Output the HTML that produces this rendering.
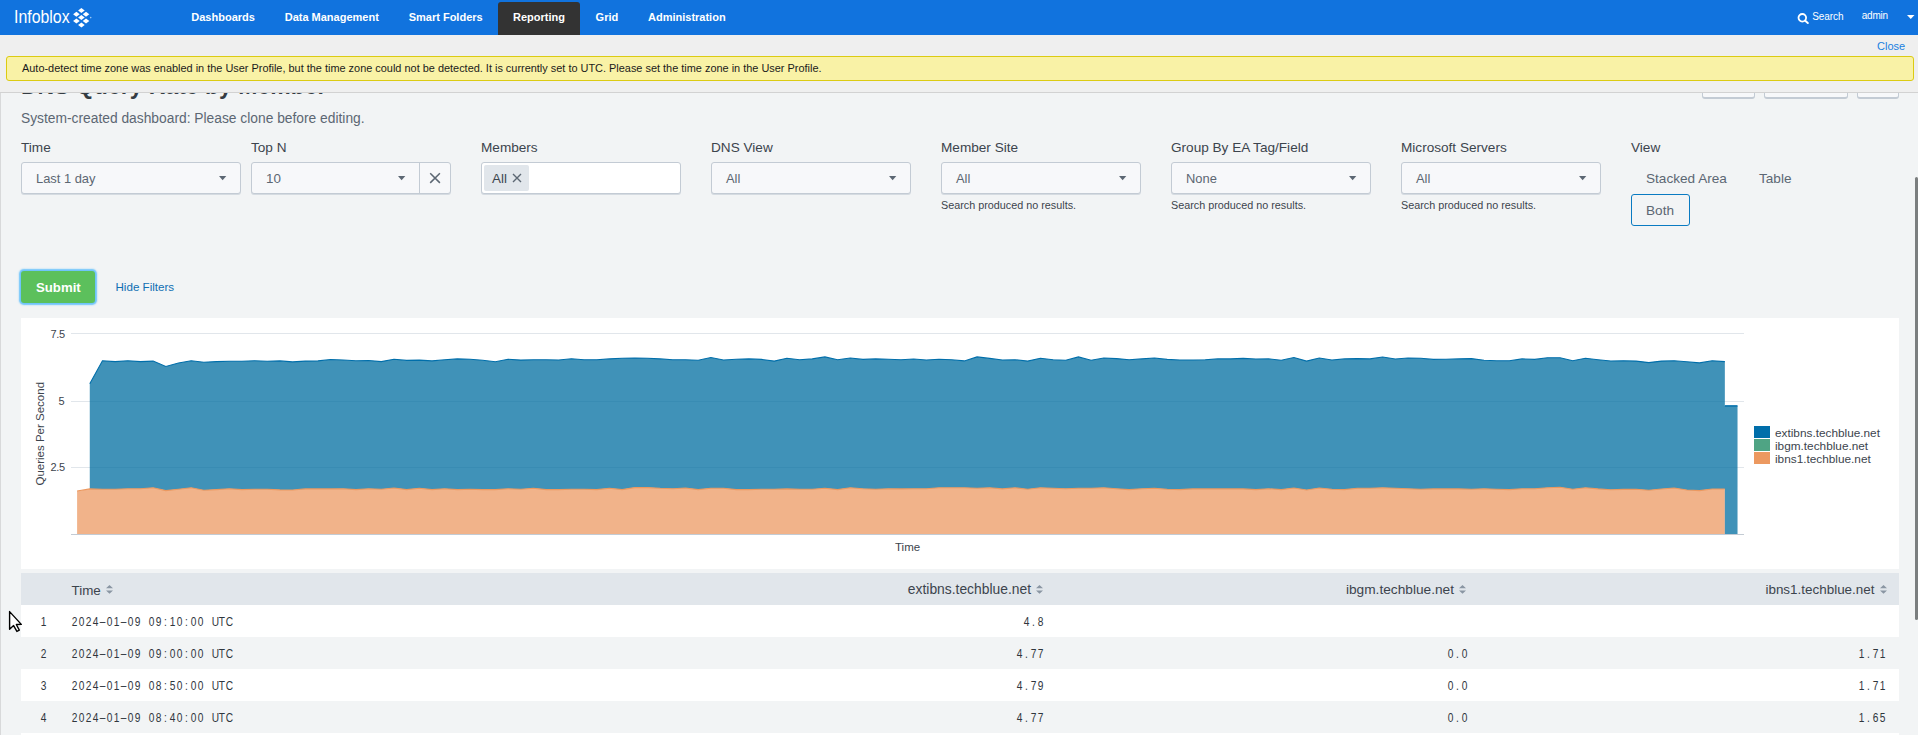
<!DOCTYPE html>
<html><head><meta charset="utf-8"><title>Infoblox Reporting</title>
<style>
html,body{margin:0;padding:0;}
body{width:1918px;height:735px;overflow:hidden;position:relative;background:#f2f4f5;font-family:'Liberation Sans', sans-serif;}
.t{position:absolute;white-space:nowrap;}
.panel{position:absolute;}
.sel{position:absolute;border:1px solid #c3cbd4;border-radius:3px;background:#f7f8fa;box-shadow:0 1px 0 #d5dbe1;}
</style></head><body>
<div class="panel" style="left:0;top:92px;width:1px;height:643px;background:#d8d9da"></div>
<div class="t" style="left:21px;top:74.53px;font-size:23px;line-height:23px;color:#353c43;font-weight:bold;font-family:'Liberation Sans', sans-serif;">DNS Query Rate by Member</div>
<div class="panel" style="left:1702px;top:66px;width:51px;height:30px;border:1px solid #c3cbd4;border-bottom-width:2px;border-radius:3px;background:#f7f8fa"></div>
<div class="panel" style="left:1764px;top:66px;width:82px;height:30px;border:1px solid #c3cbd4;border-bottom-width:2px;border-radius:3px;background:#f7f8fa"></div>
<div class="panel" style="left:1857px;top:66px;width:40px;height:30px;border:1px solid #c3cbd4;border-bottom-width:2px;border-radius:3px;background:#f7f8fa"></div>
<div class="t" style="left:21px;top:111.82px;font-size:13.8px;line-height:13.8px;color:#5c6773;font-weight:normal;font-family:'Liberation Sans', sans-serif;">System-created dashboard: Please clone before editing.</div>
<div class="t" style="left:21px;top:141.48px;font-size:13.6px;line-height:13.6px;color:#3c444d;font-weight:normal;font-family:'Liberation Sans', sans-serif;">Time</div>
<div class="t" style="left:251px;top:141.48px;font-size:13.6px;line-height:13.6px;color:#3c444d;font-weight:normal;font-family:'Liberation Sans', sans-serif;">Top N</div>
<div class="t" style="left:481px;top:141.48px;font-size:13.6px;line-height:13.6px;color:#3c444d;font-weight:normal;font-family:'Liberation Sans', sans-serif;">Members</div>
<div class="t" style="left:711px;top:141.48px;font-size:13.6px;line-height:13.6px;color:#3c444d;font-weight:normal;font-family:'Liberation Sans', sans-serif;">DNS View</div>
<div class="t" style="left:941px;top:141.48px;font-size:13.6px;line-height:13.6px;color:#3c444d;font-weight:normal;font-family:'Liberation Sans', sans-serif;">Member Site</div>
<div class="t" style="left:1171px;top:141.48px;font-size:13.6px;line-height:13.6px;color:#3c444d;font-weight:normal;font-family:'Liberation Sans', sans-serif;">Group By EA Tag/Field</div>
<div class="t" style="left:1401px;top:141.48px;font-size:13.6px;line-height:13.6px;color:#3c444d;font-weight:normal;font-family:'Liberation Sans', sans-serif;">Microsoft Servers</div>
<div class="t" style="left:1631px;top:141.48px;font-size:13.6px;line-height:13.6px;color:#3c444d;font-weight:normal;font-family:'Liberation Sans', sans-serif;">View</div>
<div class="sel" style="left:21px;top:162px;width:218px;height:30px"></div><div class="t" style="left:36px;top:172.58px;font-size:12.9px;line-height:12.9px;color:#5c6773;font-weight:normal;font-family:'Liberation Sans', sans-serif;">Last 1 day</div><svg width="8" height="5" style="position:absolute;left:219px;top:176px"><path d="M0 0 H7.3 L3.65 4.3 Z" fill="#5c6773"/></svg>
<div class="sel" style="left:251px;top:162px;width:198px;height:30px"></div>
<div class="panel" style="left:419px;top:163px;width:1px;height:30px;background:#c3cbd4"></div>
<div class="t" style="left:266px;top:171.65px;font-size:13.4px;line-height:13.4px;color:#5c6773;font-weight:normal;font-family:'Liberation Sans', sans-serif;">10</div>
<svg width="8" height="5" style="position:absolute;left:398px;top:176px"><path d="M0 0 H7.3 L3.65 4.3 Z" fill="#5c6773"/></svg>
<svg width="12" height="12" style="position:absolute;left:429px;top:172px"><path d="M1.2 1.2 L10.9 10.9 M10.9 1.2 L1.2 10.9" stroke="#5c6773" stroke-width="1.5"/></svg>
<div class="sel" style="left:481px;top:162px;width:198px;height:30px;background:#fff"></div>
<div class="panel" style="left:484px;top:165px;width:45px;height:26px;background:#e1e6eb;border-radius:2px"></div>
<div class="t" style="left:492px;top:171.65px;font-size:13.4px;line-height:13.4px;color:#3c444d;font-weight:normal;font-family:'Liberation Sans', sans-serif;">All</div>
<svg width="10" height="10" style="position:absolute;left:512px;top:173px"><path d="M1 1 L9 9 M9 1 L1 9" stroke="#5c6773" stroke-width="1.4"/></svg>
<div class="sel" style="left:711px;top:162px;width:198px;height:30px"></div><div class="t" style="left:726px;top:172.58px;font-size:12.9px;line-height:12.9px;color:#5c6773;font-weight:normal;font-family:'Liberation Sans', sans-serif;">All</div><svg width="8" height="5" style="position:absolute;left:889px;top:176px"><path d="M0 0 H7.3 L3.65 4.3 Z" fill="#5c6773"/></svg>
<div class="sel" style="left:941px;top:162px;width:198px;height:30px"></div><div class="t" style="left:956px;top:172.58px;font-size:12.9px;line-height:12.9px;color:#5c6773;font-weight:normal;font-family:'Liberation Sans', sans-serif;">All</div><svg width="8" height="5" style="position:absolute;left:1119px;top:176px"><path d="M0 0 H7.3 L3.65 4.3 Z" fill="#5c6773"/></svg><div class="t" style="left:941px;top:200.36px;font-size:10.8px;line-height:10.8px;color:#3c444d;font-weight:normal;font-family:'Liberation Sans', sans-serif;">Search produced no results.</div>
<div class="sel" style="left:1171px;top:162px;width:198px;height:30px"></div><div class="t" style="left:1186px;top:172.58px;font-size:12.9px;line-height:12.9px;color:#5c6773;font-weight:normal;font-family:'Liberation Sans', sans-serif;">None</div><svg width="8" height="5" style="position:absolute;left:1349px;top:176px"><path d="M0 0 H7.3 L3.65 4.3 Z" fill="#5c6773"/></svg><div class="t" style="left:1171px;top:200.36px;font-size:10.8px;line-height:10.8px;color:#3c444d;font-weight:normal;font-family:'Liberation Sans', sans-serif;">Search produced no results.</div>
<div class="sel" style="left:1401px;top:162px;width:198px;height:30px"></div><div class="t" style="left:1416px;top:172.58px;font-size:12.9px;line-height:12.9px;color:#5c6773;font-weight:normal;font-family:'Liberation Sans', sans-serif;">All</div><svg width="8" height="5" style="position:absolute;left:1579px;top:176px"><path d="M0 0 H7.3 L3.65 4.3 Z" fill="#5c6773"/></svg><div class="t" style="left:1401px;top:200.36px;font-size:10.8px;line-height:10.8px;color:#3c444d;font-weight:normal;font-family:'Liberation Sans', sans-serif;">Search produced no results.</div>
<div class="t" style="left:1646px;top:172.48px;font-size:13.6px;line-height:13.6px;color:#5c6773;font-weight:normal;font-family:'Liberation Sans', sans-serif;">Stacked Area</div>
<div class="t" style="left:1759px;top:172.48px;font-size:13.6px;line-height:13.6px;color:#5c6773;font-weight:normal;font-family:'Liberation Sans', sans-serif;">Table</div>
<div class="panel" style="left:1631px;top:194px;width:57px;height:30px;border:1px solid #0a7bc2;border-radius:3px;background:#f2f4f5"></div>
<div class="t" style="left:1646px;top:203.98px;font-size:13.6px;line-height:13.6px;color:#5c6773;font-weight:normal;font-family:'Liberation Sans', sans-serif;">Both</div>
<div class="panel" style="left:21px;top:271px;width:74px;height:32px;border-radius:3px;background:#5cc05c;box-shadow:0 0 1.5px 1.8px rgba(92,190,252,0.9)"></div>
<div class="t" style="left:36px;top:280.82px;font-size:13.2px;line-height:13.2px;color:#ffffff;font-weight:bold;font-family:'Liberation Sans', sans-serif;">Submit</div>
<div class="t" style="left:115.5px;top:280.98px;font-size:11.6px;line-height:11.6px;color:#106fb3;font-weight:normal;font-family:'Liberation Sans', sans-serif;">Hide Filters</div>
<svg width="1878" height="251" style="position:absolute;left:21px;top:318px"><rect width="1878" height="251" fill="#ffffff"/><rect x="50" y="15" width="1673" height="1" fill="#e1e6eb"/><rect x="50" y="83" width="1673" height="1" fill="#e1e6eb"/><rect x="50" y="149" width="1673" height="1" fill="#e1e6eb"/><polygon points="56.10,216.50 56.10,173.00 68.77,170.90 81.45,171.20 94.12,171.20 106.80,170.70 119.47,170.70 132.15,169.80 144.82,172.60 157.50,171.20 170.18,169.80 182.85,172.30 195.53,171.60 208.20,170.70 220.88,171.60 233.55,171.30 246.23,171.20 258.90,171.90 271.58,172.00 284.25,170.90 296.93,170.90 309.60,170.90 322.27,170.70 334.95,171.60 347.62,170.70 360.30,171.20 372.98,170.00 385.65,171.60 398.33,170.30 411.00,171.60 423.68,170.70 436.35,171.60 449.02,171.20 461.70,171.60 474.38,171.60 487.05,170.70 499.73,171.20 512.40,170.30 525.08,171.60 537.75,171.60 550.43,171.20 563.10,171.20 575.78,171.60 588.45,170.30 601.12,171.60 613.80,169.60 626.48,169.60 639.15,170.30 651.83,170.70 664.50,170.00 677.18,171.60 689.85,170.30 702.53,170.30 715.20,171.60 727.88,171.60 740.55,171.20 753.23,171.20 765.90,170.90 778.58,171.20 791.25,171.30 803.93,170.30 816.60,171.60 829.28,169.80 841.95,170.70 854.63,171.20 867.30,170.70 879.98,170.90 892.65,170.70 905.33,170.70 918.00,169.80 930.68,169.80 943.35,169.80 956.03,170.30 968.70,169.80 981.38,170.90 994.05,169.80 1006.72,171.20 1019.40,169.80 1032.08,170.30 1044.75,170.70 1057.42,170.30 1070.10,170.30 1082.77,169.80 1095.45,170.70 1108.12,171.60 1120.80,170.70 1133.47,170.30 1146.15,171.20 1158.83,171.60 1171.50,170.90 1184.17,170.90 1196.85,170.90 1209.52,170.90 1222.20,170.90 1234.88,171.60 1247.55,170.70 1260.22,171.60 1272.90,170.00 1285.58,172.00 1298.25,170.00 1310.92,171.20 1323.60,171.60 1336.28,170.30 1348.95,170.30 1361.62,169.80 1374.30,170.30 1386.97,170.70 1399.65,171.20 1412.33,170.90 1425.00,170.90 1437.67,170.90 1450.35,171.20 1463.03,170.70 1475.70,171.20 1488.38,171.60 1501.05,170.70 1513.72,170.70 1526.40,169.80 1539.08,169.20 1551.75,171.20 1564.42,169.80 1577.10,170.90 1589.78,171.70 1602.45,171.40 1615.12,171.20 1627.80,172.30 1640.47,171.00 1653.15,170.00 1665.83,172.00 1678.50,172.60 1691.17,171.00 1703.85,171.00 1703.85,216.50" fill="#ec9a63" fill-opacity="0.75"/><polygon points="68.77,65.70 81.45,42.70 94.12,43.60 106.80,42.70 119.47,43.60 132.15,43.10 144.82,48.50 157.50,45.00 170.18,42.70 182.85,44.30 195.53,43.60 208.20,43.30 220.88,43.30 233.55,42.70 246.23,43.30 258.90,42.90 271.58,43.90 284.25,43.10 296.93,42.90 309.60,41.50 322.27,42.00 334.95,42.70 347.62,42.50 360.30,43.60 372.98,41.20 385.65,42.40 398.33,42.10 411.00,42.90 423.68,41.70 436.35,40.90 449.02,41.20 461.70,42.30 474.38,43.80 487.05,41.30 499.73,42.10 512.40,41.70 525.08,41.70 537.75,42.00 550.43,40.80 563.10,41.70 575.78,41.70 588.45,40.90 601.12,40.20 613.80,40.00 626.48,40.20 639.15,40.90 651.83,41.70 664.50,41.70 677.18,42.30 689.85,39.50 702.53,42.00 715.20,41.20 727.88,40.90 740.55,41.40 753.23,43.10 765.90,40.20 778.58,41.70 791.25,40.90 803.93,38.90 816.60,41.70 829.28,40.00 841.95,41.40 854.63,40.90 867.30,41.20 879.98,41.70 892.65,41.00 905.33,42.00 918.00,41.20 930.68,41.70 943.35,42.90 956.03,38.90 968.70,40.40 981.38,42.00 994.05,41.70 1006.72,43.10 1019.40,40.20 1032.08,41.70 1044.75,42.30 1057.42,38.90 1070.10,42.30 1082.77,40.00 1095.45,40.60 1108.12,41.70 1120.80,40.90 1133.47,40.00 1146.15,41.40 1158.83,42.00 1171.50,42.00 1184.17,41.70 1196.85,40.90 1209.52,40.90 1222.20,40.40 1234.88,41.00 1247.55,40.90 1260.22,42.30 1272.90,39.50 1285.58,43.10 1298.25,40.00 1310.92,42.00 1323.60,40.90 1336.28,40.60 1348.95,40.90 1361.62,39.00 1374.30,41.00 1386.97,40.00 1399.65,40.20 1412.33,41.40 1425.00,41.30 1437.67,40.90 1450.35,40.60 1463.03,42.30 1475.70,42.70 1488.38,42.70 1501.05,40.90 1513.72,41.40 1526.40,39.70 1539.08,39.70 1551.75,42.70 1564.42,40.20 1577.10,41.70 1589.78,43.00 1602.45,42.70 1615.12,43.10 1627.80,44.60 1640.47,43.10 1653.15,42.70 1665.83,43.80 1678.50,44.90 1691.17,42.80 1703.85,43.60 1703.85,87.90 1716.53,87.90 1716.53,216.50 1703.85,216.50 1703.85,171.00 1691.17,171.00 1678.50,172.60 1665.83,172.00 1653.15,170.00 1640.47,171.00 1627.80,172.30 1615.12,171.20 1602.45,171.40 1589.78,171.70 1577.10,170.90 1564.42,169.80 1551.75,171.20 1539.08,169.20 1526.40,169.80 1513.72,170.70 1501.05,170.70 1488.38,171.60 1475.70,171.20 1463.03,170.70 1450.35,171.20 1437.67,170.90 1425.00,170.90 1412.33,170.90 1399.65,171.20 1386.97,170.70 1374.30,170.30 1361.62,169.80 1348.95,170.30 1336.28,170.30 1323.60,171.60 1310.92,171.20 1298.25,170.00 1285.58,172.00 1272.90,170.00 1260.22,171.60 1247.55,170.70 1234.88,171.60 1222.20,170.90 1209.52,170.90 1196.85,170.90 1184.17,170.90 1171.50,170.90 1158.83,171.60 1146.15,171.20 1133.47,170.30 1120.80,170.70 1108.12,171.60 1095.45,170.70 1082.77,169.80 1070.10,170.30 1057.42,170.30 1044.75,170.70 1032.08,170.30 1019.40,169.80 1006.72,171.20 994.05,169.80 981.38,170.90 968.70,169.80 956.03,170.30 943.35,169.80 930.68,169.80 918.00,169.80 905.33,170.70 892.65,170.70 879.98,170.90 867.30,170.70 854.63,171.20 841.95,170.70 829.28,169.80 816.60,171.60 803.93,170.30 791.25,171.30 778.58,171.20 765.90,170.90 753.23,171.20 740.55,171.20 727.88,171.60 715.20,171.60 702.53,170.30 689.85,170.30 677.18,171.60 664.50,170.00 651.83,170.70 639.15,170.30 626.48,169.60 613.80,169.60 601.12,171.60 588.45,170.30 575.78,171.60 563.10,171.20 550.43,171.20 537.75,171.60 525.08,171.60 512.40,170.30 499.73,171.20 487.05,170.70 474.38,171.60 461.70,171.60 449.02,171.20 436.35,171.60 423.68,170.70 411.00,171.60 398.33,170.30 385.65,171.60 372.98,170.00 360.30,171.20 347.62,170.70 334.95,171.60 322.27,170.70 309.60,170.90 296.93,170.90 284.25,170.90 271.58,172.00 258.90,171.90 246.23,171.20 233.55,171.30 220.88,171.60 208.20,170.70 195.53,171.60 182.85,172.30 170.18,169.80 157.50,171.20 144.82,172.60 132.15,169.80 119.47,170.70 106.80,170.70 94.12,171.20 81.45,171.20 68.77,170.90" fill="#006ea0" fill-opacity="0.75"/><polyline points="56.10,173.00 68.77,170.90 81.45,171.20 94.12,171.20 106.80,170.70 119.47,170.70 132.15,169.80 144.82,172.60 157.50,171.20 170.18,169.80 182.85,172.30 195.53,171.60 208.20,170.70 220.88,171.60 233.55,171.30 246.23,171.20 258.90,171.90 271.58,172.00 284.25,170.90 296.93,170.90 309.60,170.90 322.27,170.70 334.95,171.60 347.62,170.70 360.30,171.20 372.98,170.00 385.65,171.60 398.33,170.30 411.00,171.60 423.68,170.70 436.35,171.60 449.02,171.20 461.70,171.60 474.38,171.60 487.05,170.70 499.73,171.20 512.40,170.30 525.08,171.60 537.75,171.60 550.43,171.20 563.10,171.20 575.78,171.60 588.45,170.30 601.12,171.60 613.80,169.60 626.48,169.60 639.15,170.30 651.83,170.70 664.50,170.00 677.18,171.60 689.85,170.30 702.53,170.30 715.20,171.60 727.88,171.60 740.55,171.20 753.23,171.20 765.90,170.90 778.58,171.20 791.25,171.30 803.93,170.30 816.60,171.60 829.28,169.80 841.95,170.70 854.63,171.20 867.30,170.70 879.98,170.90 892.65,170.70 905.33,170.70 918.00,169.80 930.68,169.80 943.35,169.80 956.03,170.30 968.70,169.80 981.38,170.90 994.05,169.80 1006.72,171.20 1019.40,169.80 1032.08,170.30 1044.75,170.70 1057.42,170.30 1070.10,170.30 1082.77,169.80 1095.45,170.70 1108.12,171.60 1120.80,170.70 1133.47,170.30 1146.15,171.20 1158.83,171.60 1171.50,170.90 1184.17,170.90 1196.85,170.90 1209.52,170.90 1222.20,170.90 1234.88,171.60 1247.55,170.70 1260.22,171.60 1272.90,170.00 1285.58,172.00 1298.25,170.00 1310.92,171.20 1323.60,171.60 1336.28,170.30 1348.95,170.30 1361.62,169.80 1374.30,170.30 1386.97,170.70 1399.65,171.20 1412.33,170.90 1425.00,170.90 1437.67,170.90 1450.35,171.20 1463.03,170.70 1475.70,171.20 1488.38,171.60 1501.05,170.70 1513.72,170.70 1526.40,169.80 1539.08,169.20 1551.75,171.20 1564.42,169.80 1577.10,170.90 1589.78,171.70 1602.45,171.40 1615.12,171.20 1627.80,172.30 1640.47,171.00 1653.15,170.00 1665.83,172.00 1678.50,172.60 1691.17,171.00 1703.85,171.00" fill="none" stroke="#ec9960" stroke-width="1.1"/><polyline points="68.77,65.70 81.45,42.70 94.12,43.60 106.80,42.70 119.47,43.60 132.15,43.10 144.82,48.50 157.50,45.00 170.18,42.70 182.85,44.30 195.53,43.60 208.20,43.30 220.88,43.30 233.55,42.70 246.23,43.30 258.90,42.90 271.58,43.90 284.25,43.10 296.93,42.90 309.60,41.50 322.27,42.00 334.95,42.70 347.62,42.50 360.30,43.60 372.98,41.20 385.65,42.40 398.33,42.10 411.00,42.90 423.68,41.70 436.35,40.90 449.02,41.20 461.70,42.30 474.38,43.80 487.05,41.30 499.73,42.10 512.40,41.70 525.08,41.70 537.75,42.00 550.43,40.80 563.10,41.70 575.78,41.70 588.45,40.90 601.12,40.20 613.80,40.00 626.48,40.20 639.15,40.90 651.83,41.70 664.50,41.70 677.18,42.30 689.85,39.50 702.53,42.00 715.20,41.20 727.88,40.90 740.55,41.40 753.23,43.10 765.90,40.20 778.58,41.70 791.25,40.90 803.93,38.90 816.60,41.70 829.28,40.00 841.95,41.40 854.63,40.90 867.30,41.20 879.98,41.70 892.65,41.00 905.33,42.00 918.00,41.20 930.68,41.70 943.35,42.90 956.03,38.90 968.70,40.40 981.38,42.00 994.05,41.70 1006.72,43.10 1019.40,40.20 1032.08,41.70 1044.75,42.30 1057.42,38.90 1070.10,42.30 1082.77,40.00 1095.45,40.60 1108.12,41.70 1120.80,40.90 1133.47,40.00 1146.15,41.40 1158.83,42.00 1171.50,42.00 1184.17,41.70 1196.85,40.90 1209.52,40.90 1222.20,40.40 1234.88,41.00 1247.55,40.90 1260.22,42.30 1272.90,39.50 1285.58,43.10 1298.25,40.00 1310.92,42.00 1323.60,40.90 1336.28,40.60 1348.95,40.90 1361.62,39.00 1374.30,41.00 1386.97,40.00 1399.65,40.20 1412.33,41.40 1425.00,41.30 1437.67,40.90 1450.35,40.60 1463.03,42.30 1475.70,42.70 1488.38,42.70 1501.05,40.90 1513.72,41.40 1526.40,39.70 1539.08,39.70 1551.75,42.70 1564.42,40.20 1577.10,41.70 1589.78,43.00 1602.45,42.70 1615.12,43.10 1627.80,44.60 1640.47,43.10 1653.15,42.70 1665.83,43.80 1678.50,44.90 1691.17,42.80 1703.85,43.60" fill="none" stroke="#006eaa" stroke-width="1.1"/><line x1="1703.85" y1="87.89999999999998" x2="1716.53" y2="87.89999999999998" stroke="#006eaa" stroke-width="1.5"/><rect x="50" y="216" width="1673" height="1" fill="#c3cbd4"/></svg>
<div class="t" style="right:1853.4px;top:329.19px;font-size:11px;line-height:11px;color:#3c444d;font-weight:normal;font-family:'Liberation Sans', sans-serif;letter-spacing:-0.4px">7.5</div>
<div class="t" style="right:1853.4px;top:396.19px;font-size:11px;line-height:11px;color:#3c444d;font-weight:normal;font-family:'Liberation Sans', sans-serif;">5</div>
<div class="t" style="right:1853.4px;top:462.19px;font-size:11px;line-height:11px;color:#3c444d;font-weight:normal;font-family:'Liberation Sans', sans-serif;letter-spacing:-0.4px">2.5</div>
<div class="t" style="left:-14px;top:428px;width:110px;text-align:center;font-size:11.5px;line-height:11.5px;color:#3c444d;transform:rotate(-90deg);font-family:'Liberation Sans', sans-serif">Queries Per Second</div>
<div class="t" style="left:895px;top:542.16px;font-size:11.5px;line-height:11.5px;color:#3c444d;font-weight:normal;font-family:'Liberation Sans', sans-serif;">Time</div>
<div class="panel" style="left:1754px;top:426px;width:16px;height:12px;background:#006eaa"></div>
<div class="t" style="left:1775px;top:428.01px;font-size:11.8px;line-height:11.8px;color:#3c444d;font-weight:normal;font-family:'Liberation Sans', sans-serif;">extibns.techblue.net</div>
<div class="panel" style="left:1754px;top:439px;width:16px;height:12px;background:#4fa484"></div>
<div class="t" style="left:1775px;top:441.01px;font-size:11.8px;line-height:11.8px;color:#3c444d;font-weight:normal;font-family:'Liberation Sans', sans-serif;">ibgm.techblue.net</div>
<div class="panel" style="left:1754px;top:452px;width:16px;height:12px;background:#ec9960"></div>
<div class="t" style="left:1775px;top:454.01px;font-size:11.8px;line-height:11.8px;color:#3c444d;font-weight:normal;font-family:'Liberation Sans', sans-serif;">ibns1.techblue.net</div>
<div class="panel" style="left:21px;top:573px;width:1878px;height:32px;background:#e1e6eb"></div>
<div class="t" style="left:71.5px;top:583.65px;font-size:13.4px;line-height:13.4px;color:#3c444d;font-weight:normal;font-family:'Liberation Sans', sans-serif;">Time</div>
<svg width="7" height="9" style="position:absolute;left:106px;top:585px"><path d="M0 3.2 L3.5 0 L7 3.2 Z M0 5.4 L7 5.4 L3.5 8.8 Z" fill="#8a96a3"/></svg>
<div class="t" style="right:887px;top:583.27px;font-size:13.85px;line-height:13.85px;color:#3c444d;font-weight:normal;font-family:'Liberation Sans', sans-serif;">extibns.techblue.net</div>
<svg width="7" height="9" style="position:absolute;left:1036px;top:585px"><path d="M0 3.2 L3.5 0 L7 3.2 Z M0 5.4 L7 5.4 L3.5 8.8 Z" fill="#8a96a3"/></svg>
<div class="t" style="right:464px;top:583.40px;font-size:13.7px;line-height:13.7px;color:#3c444d;font-weight:normal;font-family:'Liberation Sans', sans-serif;">ibgm.techblue.net</div>
<svg width="7" height="9" style="position:absolute;left:1459px;top:585px"><path d="M0 3.2 L3.5 0 L7 3.2 Z M0 5.4 L7 5.4 L3.5 8.8 Z" fill="#8a96a3"/></svg>
<div class="t" style="right:43.5px;top:582.91px;font-size:13.45px;line-height:13.45px;color:#3c444d;font-weight:normal;font-family:'Liberation Sans', sans-serif;">ibns1.techblue.net</div>
<svg width="7" height="9" style="position:absolute;left:1879.5px;top:585px"><path d="M0 3.2 L3.5 0 L7 3.2 Z M0 5.4 L7 5.4 L3.5 8.8 Z" fill="#8a96a3"/></svg>
<div class="panel" style="left:21px;top:605px;width:1878px;height:32px;background:#ffffff"></div>
<div class="t" style="left:39.76px;top:615.50px;width:6.99px;text-align:center;font-size:12.4px;line-height:12.4px;color:#2f363d;transform:scaleX(0.82)">1</div>
<div class="t" style="left:71.20px;top:615.50px;width:6.99px;text-align:center;font-size:12.4px;line-height:12.4px;color:#2f363d;transform:scaleX(0.82)">2</div><div class="t" style="left:78.19px;top:615.50px;width:6.99px;text-align:center;font-size:12.4px;line-height:12.4px;color:#2f363d;transform:scaleX(0.82)">0</div><div class="t" style="left:85.18px;top:615.50px;width:6.99px;text-align:center;font-size:12.4px;line-height:12.4px;color:#2f363d;transform:scaleX(0.82)">2</div><div class="t" style="left:92.17px;top:615.50px;width:6.99px;text-align:center;font-size:12.4px;line-height:12.4px;color:#2f363d;transform:scaleX(0.82)">4</div><div class="t" style="left:99.16px;top:615.50px;width:6.99px;text-align:center;font-size:12.4px;line-height:12.4px;color:#2f363d;transform:scaleX(0.82)">&#8211;</div><div class="t" style="left:106.15px;top:615.50px;width:6.99px;text-align:center;font-size:12.4px;line-height:12.4px;color:#2f363d;transform:scaleX(0.82)">0</div><div class="t" style="left:113.14px;top:615.50px;width:6.99px;text-align:center;font-size:12.4px;line-height:12.4px;color:#2f363d;transform:scaleX(0.82)">1</div><div class="t" style="left:120.13px;top:615.50px;width:6.99px;text-align:center;font-size:12.4px;line-height:12.4px;color:#2f363d;transform:scaleX(0.82)">&#8211;</div><div class="t" style="left:127.12px;top:615.50px;width:6.99px;text-align:center;font-size:12.4px;line-height:12.4px;color:#2f363d;transform:scaleX(0.82)">0</div><div class="t" style="left:134.11px;top:615.50px;width:6.99px;text-align:center;font-size:12.4px;line-height:12.4px;color:#2f363d;transform:scaleX(0.82)">9</div><div class="t" style="left:148.09px;top:615.50px;width:6.99px;text-align:center;font-size:12.4px;line-height:12.4px;color:#2f363d;transform:scaleX(0.82)">0</div><div class="t" style="left:155.08px;top:615.50px;width:6.99px;text-align:center;font-size:12.4px;line-height:12.4px;color:#2f363d;transform:scaleX(0.82)">9</div><div class="t" style="left:162.07px;top:615.50px;width:6.99px;text-align:center;font-size:12.4px;line-height:12.4px;color:#2f363d;transform:scaleX(0.82)">:</div><div class="t" style="left:169.06px;top:615.50px;width:6.99px;text-align:center;font-size:12.4px;line-height:12.4px;color:#2f363d;transform:scaleX(0.82)">1</div><div class="t" style="left:176.05px;top:615.50px;width:6.99px;text-align:center;font-size:12.4px;line-height:12.4px;color:#2f363d;transform:scaleX(0.82)">0</div><div class="t" style="left:183.04px;top:615.50px;width:6.99px;text-align:center;font-size:12.4px;line-height:12.4px;color:#2f363d;transform:scaleX(0.82)">:</div><div class="t" style="left:190.03px;top:615.50px;width:6.99px;text-align:center;font-size:12.4px;line-height:12.4px;color:#2f363d;transform:scaleX(0.82)">0</div><div class="t" style="left:197.02px;top:615.50px;width:6.99px;text-align:center;font-size:12.4px;line-height:12.4px;color:#2f363d;transform:scaleX(0.82)">0</div><div class="t" style="left:211.00px;top:615.50px;width:6.99px;text-align:center;font-size:12.4px;line-height:12.4px;color:#2f363d;transform:scaleX(0.82)">U</div><div class="t" style="left:217.99px;top:615.50px;width:6.99px;text-align:center;font-size:12.4px;line-height:12.4px;color:#2f363d;transform:scaleX(0.82)">T</div><div class="t" style="left:224.98px;top:615.50px;width:6.99px;text-align:center;font-size:12.4px;line-height:12.4px;color:#2f363d;transform:scaleX(0.82)">C</div>
<div class="t" style="left:1023.03px;top:615.50px;width:6.99px;text-align:center;font-size:12.4px;line-height:12.4px;color:#2f363d;transform:scaleX(0.82)">4</div><div class="t" style="left:1030.02px;top:615.50px;width:6.99px;text-align:center;font-size:12.4px;line-height:12.4px;color:#2f363d;transform:scaleX(0.82)">.</div><div class="t" style="left:1037.01px;top:615.50px;width:6.99px;text-align:center;font-size:12.4px;line-height:12.4px;color:#2f363d;transform:scaleX(0.82)">8</div>
<div class="panel" style="left:21px;top:637px;width:1878px;height:32px;background:#f2f4f5"></div>
<div class="t" style="left:39.76px;top:647.50px;width:6.99px;text-align:center;font-size:12.4px;line-height:12.4px;color:#2f363d;transform:scaleX(0.82)">2</div>
<div class="t" style="left:71.20px;top:647.50px;width:6.99px;text-align:center;font-size:12.4px;line-height:12.4px;color:#2f363d;transform:scaleX(0.82)">2</div><div class="t" style="left:78.19px;top:647.50px;width:6.99px;text-align:center;font-size:12.4px;line-height:12.4px;color:#2f363d;transform:scaleX(0.82)">0</div><div class="t" style="left:85.18px;top:647.50px;width:6.99px;text-align:center;font-size:12.4px;line-height:12.4px;color:#2f363d;transform:scaleX(0.82)">2</div><div class="t" style="left:92.17px;top:647.50px;width:6.99px;text-align:center;font-size:12.4px;line-height:12.4px;color:#2f363d;transform:scaleX(0.82)">4</div><div class="t" style="left:99.16px;top:647.50px;width:6.99px;text-align:center;font-size:12.4px;line-height:12.4px;color:#2f363d;transform:scaleX(0.82)">&#8211;</div><div class="t" style="left:106.15px;top:647.50px;width:6.99px;text-align:center;font-size:12.4px;line-height:12.4px;color:#2f363d;transform:scaleX(0.82)">0</div><div class="t" style="left:113.14px;top:647.50px;width:6.99px;text-align:center;font-size:12.4px;line-height:12.4px;color:#2f363d;transform:scaleX(0.82)">1</div><div class="t" style="left:120.13px;top:647.50px;width:6.99px;text-align:center;font-size:12.4px;line-height:12.4px;color:#2f363d;transform:scaleX(0.82)">&#8211;</div><div class="t" style="left:127.12px;top:647.50px;width:6.99px;text-align:center;font-size:12.4px;line-height:12.4px;color:#2f363d;transform:scaleX(0.82)">0</div><div class="t" style="left:134.11px;top:647.50px;width:6.99px;text-align:center;font-size:12.4px;line-height:12.4px;color:#2f363d;transform:scaleX(0.82)">9</div><div class="t" style="left:148.09px;top:647.50px;width:6.99px;text-align:center;font-size:12.4px;line-height:12.4px;color:#2f363d;transform:scaleX(0.82)">0</div><div class="t" style="left:155.08px;top:647.50px;width:6.99px;text-align:center;font-size:12.4px;line-height:12.4px;color:#2f363d;transform:scaleX(0.82)">9</div><div class="t" style="left:162.07px;top:647.50px;width:6.99px;text-align:center;font-size:12.4px;line-height:12.4px;color:#2f363d;transform:scaleX(0.82)">:</div><div class="t" style="left:169.06px;top:647.50px;width:6.99px;text-align:center;font-size:12.4px;line-height:12.4px;color:#2f363d;transform:scaleX(0.82)">0</div><div class="t" style="left:176.05px;top:647.50px;width:6.99px;text-align:center;font-size:12.4px;line-height:12.4px;color:#2f363d;transform:scaleX(0.82)">0</div><div class="t" style="left:183.04px;top:647.50px;width:6.99px;text-align:center;font-size:12.4px;line-height:12.4px;color:#2f363d;transform:scaleX(0.82)">:</div><div class="t" style="left:190.03px;top:647.50px;width:6.99px;text-align:center;font-size:12.4px;line-height:12.4px;color:#2f363d;transform:scaleX(0.82)">0</div><div class="t" style="left:197.02px;top:647.50px;width:6.99px;text-align:center;font-size:12.4px;line-height:12.4px;color:#2f363d;transform:scaleX(0.82)">0</div><div class="t" style="left:211.00px;top:647.50px;width:6.99px;text-align:center;font-size:12.4px;line-height:12.4px;color:#2f363d;transform:scaleX(0.82)">U</div><div class="t" style="left:217.99px;top:647.50px;width:6.99px;text-align:center;font-size:12.4px;line-height:12.4px;color:#2f363d;transform:scaleX(0.82)">T</div><div class="t" style="left:224.98px;top:647.50px;width:6.99px;text-align:center;font-size:12.4px;line-height:12.4px;color:#2f363d;transform:scaleX(0.82)">C</div>
<div class="t" style="left:1016.04px;top:647.50px;width:6.99px;text-align:center;font-size:12.4px;line-height:12.4px;color:#2f363d;transform:scaleX(0.82)">4</div><div class="t" style="left:1023.03px;top:647.50px;width:6.99px;text-align:center;font-size:12.4px;line-height:12.4px;color:#2f363d;transform:scaleX(0.82)">.</div><div class="t" style="left:1030.02px;top:647.50px;width:6.99px;text-align:center;font-size:12.4px;line-height:12.4px;color:#2f363d;transform:scaleX(0.82)">7</div><div class="t" style="left:1037.01px;top:647.50px;width:6.99px;text-align:center;font-size:12.4px;line-height:12.4px;color:#2f363d;transform:scaleX(0.82)">7</div>
<div class="t" style="left:1447.03px;top:647.50px;width:6.99px;text-align:center;font-size:12.4px;line-height:12.4px;color:#2f363d;transform:scaleX(0.82)">0</div><div class="t" style="left:1454.02px;top:647.50px;width:6.99px;text-align:center;font-size:12.4px;line-height:12.4px;color:#2f363d;transform:scaleX(0.82)">.</div><div class="t" style="left:1461.01px;top:647.50px;width:6.99px;text-align:center;font-size:12.4px;line-height:12.4px;color:#2f363d;transform:scaleX(0.82)">0</div>
<div class="t" style="left:1858.34px;top:647.50px;width:6.99px;text-align:center;font-size:12.4px;line-height:12.4px;color:#2f363d;transform:scaleX(0.82)">1</div><div class="t" style="left:1865.33px;top:647.50px;width:6.99px;text-align:center;font-size:12.4px;line-height:12.4px;color:#2f363d;transform:scaleX(0.82)">.</div><div class="t" style="left:1872.32px;top:647.50px;width:6.99px;text-align:center;font-size:12.4px;line-height:12.4px;color:#2f363d;transform:scaleX(0.82)">7</div><div class="t" style="left:1879.31px;top:647.50px;width:6.99px;text-align:center;font-size:12.4px;line-height:12.4px;color:#2f363d;transform:scaleX(0.82)">1</div>
<div class="panel" style="left:21px;top:669px;width:1878px;height:32px;background:#ffffff"></div>
<div class="t" style="left:39.76px;top:679.50px;width:6.99px;text-align:center;font-size:12.4px;line-height:12.4px;color:#2f363d;transform:scaleX(0.82)">3</div>
<div class="t" style="left:71.20px;top:679.50px;width:6.99px;text-align:center;font-size:12.4px;line-height:12.4px;color:#2f363d;transform:scaleX(0.82)">2</div><div class="t" style="left:78.19px;top:679.50px;width:6.99px;text-align:center;font-size:12.4px;line-height:12.4px;color:#2f363d;transform:scaleX(0.82)">0</div><div class="t" style="left:85.18px;top:679.50px;width:6.99px;text-align:center;font-size:12.4px;line-height:12.4px;color:#2f363d;transform:scaleX(0.82)">2</div><div class="t" style="left:92.17px;top:679.50px;width:6.99px;text-align:center;font-size:12.4px;line-height:12.4px;color:#2f363d;transform:scaleX(0.82)">4</div><div class="t" style="left:99.16px;top:679.50px;width:6.99px;text-align:center;font-size:12.4px;line-height:12.4px;color:#2f363d;transform:scaleX(0.82)">&#8211;</div><div class="t" style="left:106.15px;top:679.50px;width:6.99px;text-align:center;font-size:12.4px;line-height:12.4px;color:#2f363d;transform:scaleX(0.82)">0</div><div class="t" style="left:113.14px;top:679.50px;width:6.99px;text-align:center;font-size:12.4px;line-height:12.4px;color:#2f363d;transform:scaleX(0.82)">1</div><div class="t" style="left:120.13px;top:679.50px;width:6.99px;text-align:center;font-size:12.4px;line-height:12.4px;color:#2f363d;transform:scaleX(0.82)">&#8211;</div><div class="t" style="left:127.12px;top:679.50px;width:6.99px;text-align:center;font-size:12.4px;line-height:12.4px;color:#2f363d;transform:scaleX(0.82)">0</div><div class="t" style="left:134.11px;top:679.50px;width:6.99px;text-align:center;font-size:12.4px;line-height:12.4px;color:#2f363d;transform:scaleX(0.82)">9</div><div class="t" style="left:148.09px;top:679.50px;width:6.99px;text-align:center;font-size:12.4px;line-height:12.4px;color:#2f363d;transform:scaleX(0.82)">0</div><div class="t" style="left:155.08px;top:679.50px;width:6.99px;text-align:center;font-size:12.4px;line-height:12.4px;color:#2f363d;transform:scaleX(0.82)">8</div><div class="t" style="left:162.07px;top:679.50px;width:6.99px;text-align:center;font-size:12.4px;line-height:12.4px;color:#2f363d;transform:scaleX(0.82)">:</div><div class="t" style="left:169.06px;top:679.50px;width:6.99px;text-align:center;font-size:12.4px;line-height:12.4px;color:#2f363d;transform:scaleX(0.82)">5</div><div class="t" style="left:176.05px;top:679.50px;width:6.99px;text-align:center;font-size:12.4px;line-height:12.4px;color:#2f363d;transform:scaleX(0.82)">0</div><div class="t" style="left:183.04px;top:679.50px;width:6.99px;text-align:center;font-size:12.4px;line-height:12.4px;color:#2f363d;transform:scaleX(0.82)">:</div><div class="t" style="left:190.03px;top:679.50px;width:6.99px;text-align:center;font-size:12.4px;line-height:12.4px;color:#2f363d;transform:scaleX(0.82)">0</div><div class="t" style="left:197.02px;top:679.50px;width:6.99px;text-align:center;font-size:12.4px;line-height:12.4px;color:#2f363d;transform:scaleX(0.82)">0</div><div class="t" style="left:211.00px;top:679.50px;width:6.99px;text-align:center;font-size:12.4px;line-height:12.4px;color:#2f363d;transform:scaleX(0.82)">U</div><div class="t" style="left:217.99px;top:679.50px;width:6.99px;text-align:center;font-size:12.4px;line-height:12.4px;color:#2f363d;transform:scaleX(0.82)">T</div><div class="t" style="left:224.98px;top:679.50px;width:6.99px;text-align:center;font-size:12.4px;line-height:12.4px;color:#2f363d;transform:scaleX(0.82)">C</div>
<div class="t" style="left:1016.04px;top:679.50px;width:6.99px;text-align:center;font-size:12.4px;line-height:12.4px;color:#2f363d;transform:scaleX(0.82)">4</div><div class="t" style="left:1023.03px;top:679.50px;width:6.99px;text-align:center;font-size:12.4px;line-height:12.4px;color:#2f363d;transform:scaleX(0.82)">.</div><div class="t" style="left:1030.02px;top:679.50px;width:6.99px;text-align:center;font-size:12.4px;line-height:12.4px;color:#2f363d;transform:scaleX(0.82)">7</div><div class="t" style="left:1037.01px;top:679.50px;width:6.99px;text-align:center;font-size:12.4px;line-height:12.4px;color:#2f363d;transform:scaleX(0.82)">9</div>
<div class="t" style="left:1447.03px;top:679.50px;width:6.99px;text-align:center;font-size:12.4px;line-height:12.4px;color:#2f363d;transform:scaleX(0.82)">0</div><div class="t" style="left:1454.02px;top:679.50px;width:6.99px;text-align:center;font-size:12.4px;line-height:12.4px;color:#2f363d;transform:scaleX(0.82)">.</div><div class="t" style="left:1461.01px;top:679.50px;width:6.99px;text-align:center;font-size:12.4px;line-height:12.4px;color:#2f363d;transform:scaleX(0.82)">0</div>
<div class="t" style="left:1858.34px;top:679.50px;width:6.99px;text-align:center;font-size:12.4px;line-height:12.4px;color:#2f363d;transform:scaleX(0.82)">1</div><div class="t" style="left:1865.33px;top:679.50px;width:6.99px;text-align:center;font-size:12.4px;line-height:12.4px;color:#2f363d;transform:scaleX(0.82)">.</div><div class="t" style="left:1872.32px;top:679.50px;width:6.99px;text-align:center;font-size:12.4px;line-height:12.4px;color:#2f363d;transform:scaleX(0.82)">7</div><div class="t" style="left:1879.31px;top:679.50px;width:6.99px;text-align:center;font-size:12.4px;line-height:12.4px;color:#2f363d;transform:scaleX(0.82)">1</div>
<div class="panel" style="left:21px;top:701px;width:1878px;height:32px;background:#f2f4f5"></div>
<div class="t" style="left:39.76px;top:711.50px;width:6.99px;text-align:center;font-size:12.4px;line-height:12.4px;color:#2f363d;transform:scaleX(0.82)">4</div>
<div class="t" style="left:71.20px;top:711.50px;width:6.99px;text-align:center;font-size:12.4px;line-height:12.4px;color:#2f363d;transform:scaleX(0.82)">2</div><div class="t" style="left:78.19px;top:711.50px;width:6.99px;text-align:center;font-size:12.4px;line-height:12.4px;color:#2f363d;transform:scaleX(0.82)">0</div><div class="t" style="left:85.18px;top:711.50px;width:6.99px;text-align:center;font-size:12.4px;line-height:12.4px;color:#2f363d;transform:scaleX(0.82)">2</div><div class="t" style="left:92.17px;top:711.50px;width:6.99px;text-align:center;font-size:12.4px;line-height:12.4px;color:#2f363d;transform:scaleX(0.82)">4</div><div class="t" style="left:99.16px;top:711.50px;width:6.99px;text-align:center;font-size:12.4px;line-height:12.4px;color:#2f363d;transform:scaleX(0.82)">&#8211;</div><div class="t" style="left:106.15px;top:711.50px;width:6.99px;text-align:center;font-size:12.4px;line-height:12.4px;color:#2f363d;transform:scaleX(0.82)">0</div><div class="t" style="left:113.14px;top:711.50px;width:6.99px;text-align:center;font-size:12.4px;line-height:12.4px;color:#2f363d;transform:scaleX(0.82)">1</div><div class="t" style="left:120.13px;top:711.50px;width:6.99px;text-align:center;font-size:12.4px;line-height:12.4px;color:#2f363d;transform:scaleX(0.82)">&#8211;</div><div class="t" style="left:127.12px;top:711.50px;width:6.99px;text-align:center;font-size:12.4px;line-height:12.4px;color:#2f363d;transform:scaleX(0.82)">0</div><div class="t" style="left:134.11px;top:711.50px;width:6.99px;text-align:center;font-size:12.4px;line-height:12.4px;color:#2f363d;transform:scaleX(0.82)">9</div><div class="t" style="left:148.09px;top:711.50px;width:6.99px;text-align:center;font-size:12.4px;line-height:12.4px;color:#2f363d;transform:scaleX(0.82)">0</div><div class="t" style="left:155.08px;top:711.50px;width:6.99px;text-align:center;font-size:12.4px;line-height:12.4px;color:#2f363d;transform:scaleX(0.82)">8</div><div class="t" style="left:162.07px;top:711.50px;width:6.99px;text-align:center;font-size:12.4px;line-height:12.4px;color:#2f363d;transform:scaleX(0.82)">:</div><div class="t" style="left:169.06px;top:711.50px;width:6.99px;text-align:center;font-size:12.4px;line-height:12.4px;color:#2f363d;transform:scaleX(0.82)">4</div><div class="t" style="left:176.05px;top:711.50px;width:6.99px;text-align:center;font-size:12.4px;line-height:12.4px;color:#2f363d;transform:scaleX(0.82)">0</div><div class="t" style="left:183.04px;top:711.50px;width:6.99px;text-align:center;font-size:12.4px;line-height:12.4px;color:#2f363d;transform:scaleX(0.82)">:</div><div class="t" style="left:190.03px;top:711.50px;width:6.99px;text-align:center;font-size:12.4px;line-height:12.4px;color:#2f363d;transform:scaleX(0.82)">0</div><div class="t" style="left:197.02px;top:711.50px;width:6.99px;text-align:center;font-size:12.4px;line-height:12.4px;color:#2f363d;transform:scaleX(0.82)">0</div><div class="t" style="left:211.00px;top:711.50px;width:6.99px;text-align:center;font-size:12.4px;line-height:12.4px;color:#2f363d;transform:scaleX(0.82)">U</div><div class="t" style="left:217.99px;top:711.50px;width:6.99px;text-align:center;font-size:12.4px;line-height:12.4px;color:#2f363d;transform:scaleX(0.82)">T</div><div class="t" style="left:224.98px;top:711.50px;width:6.99px;text-align:center;font-size:12.4px;line-height:12.4px;color:#2f363d;transform:scaleX(0.82)">C</div>
<div class="t" style="left:1016.04px;top:711.50px;width:6.99px;text-align:center;font-size:12.4px;line-height:12.4px;color:#2f363d;transform:scaleX(0.82)">4</div><div class="t" style="left:1023.03px;top:711.50px;width:6.99px;text-align:center;font-size:12.4px;line-height:12.4px;color:#2f363d;transform:scaleX(0.82)">.</div><div class="t" style="left:1030.02px;top:711.50px;width:6.99px;text-align:center;font-size:12.4px;line-height:12.4px;color:#2f363d;transform:scaleX(0.82)">7</div><div class="t" style="left:1037.01px;top:711.50px;width:6.99px;text-align:center;font-size:12.4px;line-height:12.4px;color:#2f363d;transform:scaleX(0.82)">7</div>
<div class="t" style="left:1447.03px;top:711.50px;width:6.99px;text-align:center;font-size:12.4px;line-height:12.4px;color:#2f363d;transform:scaleX(0.82)">0</div><div class="t" style="left:1454.02px;top:711.50px;width:6.99px;text-align:center;font-size:12.4px;line-height:12.4px;color:#2f363d;transform:scaleX(0.82)">.</div><div class="t" style="left:1461.01px;top:711.50px;width:6.99px;text-align:center;font-size:12.4px;line-height:12.4px;color:#2f363d;transform:scaleX(0.82)">0</div>
<div class="t" style="left:1858.34px;top:711.50px;width:6.99px;text-align:center;font-size:12.4px;line-height:12.4px;color:#2f363d;transform:scaleX(0.82)">1</div><div class="t" style="left:1865.33px;top:711.50px;width:6.99px;text-align:center;font-size:12.4px;line-height:12.4px;color:#2f363d;transform:scaleX(0.82)">.</div><div class="t" style="left:1872.32px;top:711.50px;width:6.99px;text-align:center;font-size:12.4px;line-height:12.4px;color:#2f363d;transform:scaleX(0.82)">6</div><div class="t" style="left:1879.31px;top:711.50px;width:6.99px;text-align:center;font-size:12.4px;line-height:12.4px;color:#2f363d;transform:scaleX(0.82)">5</div>
<div class="panel" style="left:21px;top:733px;width:1878px;height:32px;background:#ffffff"></div>
<div class="panel" style="left:0;top:35px;width:1918px;height:57px;background:#efefef;border-bottom:1px solid #d2d2d2"></div>
<div class="panel" style="left:6px;top:56px;width:1906px;height:23px;background:#f9f2a6;border:1px solid #dccb12;border-radius:3px"></div>
<div class="t" style="left:22px;top:63.25px;font-size:10.93px;line-height:10.93px;color:#1b1b1b;font-weight:normal;font-family:'Liberation Sans', sans-serif;">Auto-detect time zone was enabled in the User Profile, but the time zone could not be detected. It is currently set to UTC. Please set the time zone in the User Profile.</div>
<div class="t" style="left:1877px;top:40.59px;font-size:11px;line-height:11px;color:#1a7fe0;font-weight:normal;font-family:'Liberation Sans', sans-serif;">Close</div>
<div class="panel" style="left:0;top:0;width:1918px;height:35px;background:#1173de"></div>
<div class="panel" style="left:498px;top:2px;width:82px;height:33px;background:#333333;border-radius:3px 3px 0 0"></div>
<div class="t" style="left:14.2px;top:7.31px;font-size:19px;line-height:19px;color:#ffffff;font-weight:normal;font-family:'Liberation Sans', sans-serif;transform:scaleX(0.835);transform-origin:0 0">Infoblox</div>
<svg width="100" height="35" style="position:absolute;left:0;top:0"><path d="M78.10 10.60 L81.40 8.10 L84.70 10.60 L81.40 13.10 Z" fill="#fff"/><path d="M73.10 14.30 L76.40 11.80 L79.70 14.30 L76.40 16.80 Z" fill="#fff"/><path d="M82.70 14.30 L86.00 11.80 L89.30 14.30 L86.00 16.80 Z" fill="#fff"/><path d="M78.10 17.60 L81.40 15.10 L84.70 17.60 L81.40 20.10 Z" fill="#fff"/><path d="M73.10 21.10 L76.40 18.60 L79.70 21.10 L76.40 23.60 Z" fill="#fff"/><path d="M82.70 21.10 L86.00 18.60 L89.30 21.10 L86.00 23.60 Z" fill="#fff"/><path d="M78.10 24.90 L81.40 22.40 L84.70 24.90 L81.40 27.40 Z" fill="#fff"/><circle cx="90.7" cy="17.6" r="0.8" fill="#9cc8f5"/></svg>
<div class="t" style="left:191.3px;top:11.69px;font-size:11px;line-height:11px;color:#ffffff;font-weight:bold;font-family:'Liberation Sans', sans-serif;">Dashboards</div>
<div class="t" style="left:284.7px;top:11.69px;font-size:11px;line-height:11px;color:#ffffff;font-weight:bold;font-family:'Liberation Sans', sans-serif;">Data Management</div>
<div class="t" style="left:408.7px;top:11.69px;font-size:11px;line-height:11px;color:#ffffff;font-weight:bold;font-family:'Liberation Sans', sans-serif;">Smart Folders</div>
<div class="t" style="left:513px;top:11.69px;font-size:11px;line-height:11px;color:#ffffff;font-weight:bold;font-family:'Liberation Sans', sans-serif;">Reporting</div>
<div class="t" style="left:595.6px;top:11.69px;font-size:11px;line-height:11px;color:#ffffff;font-weight:bold;font-family:'Liberation Sans', sans-serif;">Grid</div>
<div class="t" style="left:648px;top:11.69px;font-size:11px;line-height:11px;color:#ffffff;font-weight:bold;font-family:'Liberation Sans', sans-serif;">Administration</div>
<svg width="14" height="14" style="position:absolute;left:1797px;top:12px"><circle cx="5.3" cy="5.8" r="3.8" stroke="#fff" stroke-width="1.8" fill="none"/><path d="M8 8.6 L10.8 11" stroke="#fff" stroke-width="2" stroke-linecap="round"/></svg>
<div class="t" style="left:1812.3px;top:11.93px;font-size:10px;line-height:10px;color:#ffffff;font-weight:normal;font-family:'Liberation Sans', sans-serif;letter-spacing:-0.1px">Search</div>
<div class="t" style="left:1861.7px;top:10.53px;font-size:10px;line-height:10px;color:#ffffff;font-weight:normal;font-family:'Liberation Sans', sans-serif;letter-spacing:-0.2px">admin</div>
<svg width="8" height="5" style="position:absolute;left:1906.5px;top:15px"><path d="M0 0 H7.5 L3.75 4 Z" fill="#fff"/></svg>
<div class="panel" style="left:1914.6px;top:177px;width:3.4px;height:443px;background:#7b7e7f;border-radius:2px"></div>
<svg width="30" height="40" style="position:absolute;left:0;top:600px"><path d="M9.6 11.6 L9.6 29.2 L13.6 25.6 L16.9 31.4 L19.3 30.1 L16.3 24.5 L21.3 24.4 Z" fill="#fff" stroke="#000" stroke-width="1.4" stroke-linejoin="round"/></svg>
</body></html>
